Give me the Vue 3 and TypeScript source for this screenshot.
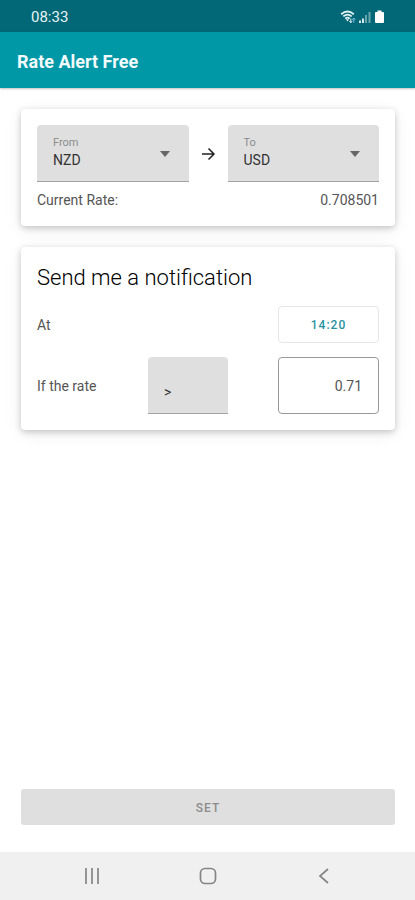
<script setup lang="ts">
import { ref } from 'vue'

const currencies = ['NZD', 'USD', 'AUD', 'EUR', 'GBP']
const from = ref('NZD')
const to = ref('USD')
const comparison = ref('>')
const threshold = ref('0.71')
const currentRate = '0.708501'
const alertTime = '14:20'
</script>

<template>
  <div class="screen">
    <div class="status">
      <span>08:33</span>
      <svg class="status-icons" width="46" height="16" viewBox="0 0 46 16" aria-hidden="true">
        <g fill="none" stroke="#e3f1f3" stroke-width="1.8">
          <path d="M1.2 5.2Q7.5 -0.2 13.8 5.2" />
          <path d="M3.3 7.4Q7.5 3.8 11.7 7.4" />
          <path d="M5.3 9.6Q7.5 7.7 9.7 9.6" />
        </g>
        <path d="M5.8 10.2h3.4l-1.7 2.4z" fill="#e3f1f3" />
        <path d="M10.8 9.5v4M9.4 12l1.4 1.7 1.4-1.7" fill="none" stroke="#e3f1f3" />
        <path d="M13.8 13.5v-4M12.400 10.700l1.400-1.700 1.400 1.700" fill="none" stroke="#7fbcec" />
        <path d="M20 14v-2.500M23 14v-4.500" stroke="#d5e8ea" stroke-width="2" />
        <path d="M26 14V6M29.500 14V3" stroke="#69a5ad" stroke-width="2" />
        <path d="M37.500 1.500h4v1.500h1.500q1 0 1 1v9q0 1-1 1h-7q-1 0-1-1V4q0-1 1-1h1.500z" fill="#fff" />
      </svg>
    </div>
    <header class="appbar"><h1>Rate Alert Free</h1></header>

    <main>
      <section class="card">
        <div class="pair">
          <div class="field">
            <label for="from">From</label>
            <select id="from" v-model="from">
              <option v-for="c in currencies" :key="c">{{ c }}</option>
            </select>
            <svg class="caret" width="10" height="6" viewBox="0 0 10 6" aria-hidden="true"><path d="M0 0h10L5 6z" /></svg>
          </div>
          <svg class="arrow" width="15" height="14" viewBox="0 0 15 14" aria-hidden="true">
            <path d="M1 7h12M7.500 1.500L13 7l-5.500 5.500" />
          </svg>
          <div class="field">
            <label for="to">To</label>
            <select id="to" v-model="to">
              <option v-for="c in currencies" :key="c">{{ c }}</option>
            </select>
            <svg class="caret" width="10" height="6" viewBox="0 0 10 6" aria-hidden="true"><path d="M0 0h10L5 6z" /></svg>
          </div>
        </div>
        <div class="rate">
          <span>Current Rate:</span>
          <span>{{ currentRate }}</span>
        </div>
      </section>

      <section class="card">
        <h2>Send me a notification</h2>
        <div class="row">
          <span>At</span>
          <button class="time" type="button">{{ alertTime }}</button>
        </div>
        <div class="row condition">
          <label for="threshold">If the rate</label>
          <div class="field small">
            <select id="comparison" v-model="comparison" aria-label="Comparison">
              <option>&gt;</option>
              <option>&lt;</option>
            </select>
          </div>
          <input id="threshold" v-model="threshold" class="threshold" type="text" inputmode="decimal" />
        </div>
      </section>

      <button class="set" type="button" disabled>SET</button>
    </main>

    <nav class="navbar">
      <button type="button" aria-label="Recent apps">
        <svg width="18" height="18" viewBox="0 0 18 18"><path d="M3 1v16M9 1v16M15 1v16" /></svg>
      </button>
      <button type="button" aria-label="Home">
        <svg width="18" height="18" viewBox="0 0 18 18"><rect x="1.500" y="1.500" width="15" height="15" rx="4.500" /></svg>
      </button>
      <button type="button" aria-label="Back">
        <svg width="18" height="18" viewBox="0 0 18 18"><path d="M13 2L5 9l8 7" /></svg>
      </button>
    </nav>
  </div>
</template>

<style>
body {
  margin: 0;
  background: #fff;
}
</style>

<style scoped>
.screen {
  display: flex;
  flex-direction: column;
  min-height: 100vh;
  font-family: Roboto, "Liberation Sans", sans-serif;
  font-size: 14px;
  font-weight: 400;
  color: #555;
}
.screen * {
  box-sizing: border-box;
}
button,
input,
select {
  margin: 0;
  font: inherit;
  color: inherit;
}
.status {
  display: flex;
  align-items: center;
  justify-content: space-between;
  height: 32px;
  padding: 2px 29px 0 31px;
  background: #026877;
  color: #e6f3f5;
  font-size: 15px;
}
.appbar {
  display: flex;
  align-items: center;
  height: 56px;
  padding: 4px 17px 0;
  background: #0097a7;
  box-shadow: 0 1px 2px rgba(0, 0, 0, 0.25);
}
h1 {
  margin: 0;
  font-size: 18px;
  font-weight: 700;
  line-height: 24px;
  color: #f2fafb;
}
main {
  flex: 1;
  display: flex;
  flex-direction: column;
  gap: 21px;
  padding: 21px 20px 27px 21px;
}
.card {
  padding: 16px;
  border-radius: 4px;
  background: #fff;
  box-shadow: 0 2px 6px rgba(0, 0, 0, 0.2), 0 4px 18px rgba(0, 0, 0, 0.07);
}
.pair {
  display: flex;
  align-items: center;
  gap: 12px;
}
.field {
  position: relative;
  flex: 1;
  height: 57px;
}
.field label {
  position: absolute;
  top: 11px;
  left: 16px;
  font-size: 11px;
  line-height: 13px;
  color: #8c8c8c;
}
.field select {
  width: 100%;
  height: 100%;
  padding: 14px 16px 0;
  border: 0;
  border-bottom: 1px solid #a3a3a3;
  border-radius: 4px 4px 0 0;
  background: #dfdfdf;
  color: #333;
  appearance: none;
}
.caret {
  position: absolute;
  top: 26px;
  right: 19px;
  fill: #666;
  pointer-events: none;
}
.arrow {
  fill: none;
  stroke: #222;
  stroke-width: 1.5;
}
.rate {
  display: flex;
  justify-content: space-between;
  margin-top: 8px;
  line-height: 20px;
}
h2 {
  margin: 0;
  padding: 1px 0 14px;
  font-size: 22px;
  font-weight: 300;
  line-height: 28px;
  color: #000;
}
.row {
  display: flex;
  align-items: center;
  justify-content: space-between;
}
.time {
  width: 101px;
  height: 37px;
  border: 1px solid #e6e6e6;
  border-radius: 4px;
  background: #fff;
  color: #2a929f;
  font-size: 12px;
  font-weight: 500;
  letter-spacing: 1px;
}
.condition {
  margin-top: 14px;
}
.condition > label {
  width: 111px;
}
.field.small {
  flex: none;
  width: 80px;
  margin-right: auto;
}
.threshold {
  width: 101px;
  height: 57px;
  padding: 0 16px;
  border: 1px solid #999;
  border-radius: 4px;
  background: #fff;
  text-align: right;
}
.set {
  height: 36px;
  margin-top: auto;
  padding: 2px 0 0;
  border: 0;
  border-radius: 3px;
  background: #dfdfdf;
  color: #8c8c8c;
  font-size: 12px;
  font-weight: 500;
  letter-spacing: 1px;
}
.navbar {
  display: flex;
  align-items: center;
  justify-content: center;
  gap: 68px;
  height: 48px;
  background: #f0f0f0;
}
.navbar button {
  display: grid;
  place-items: center;
  width: 48px;
  height: 48px;
  padding: 0;
  border: 0;
  background: none;
}
.navbar svg {
  fill: none;
  stroke: #858585;
  stroke-width: 1.7;
}
</style>
